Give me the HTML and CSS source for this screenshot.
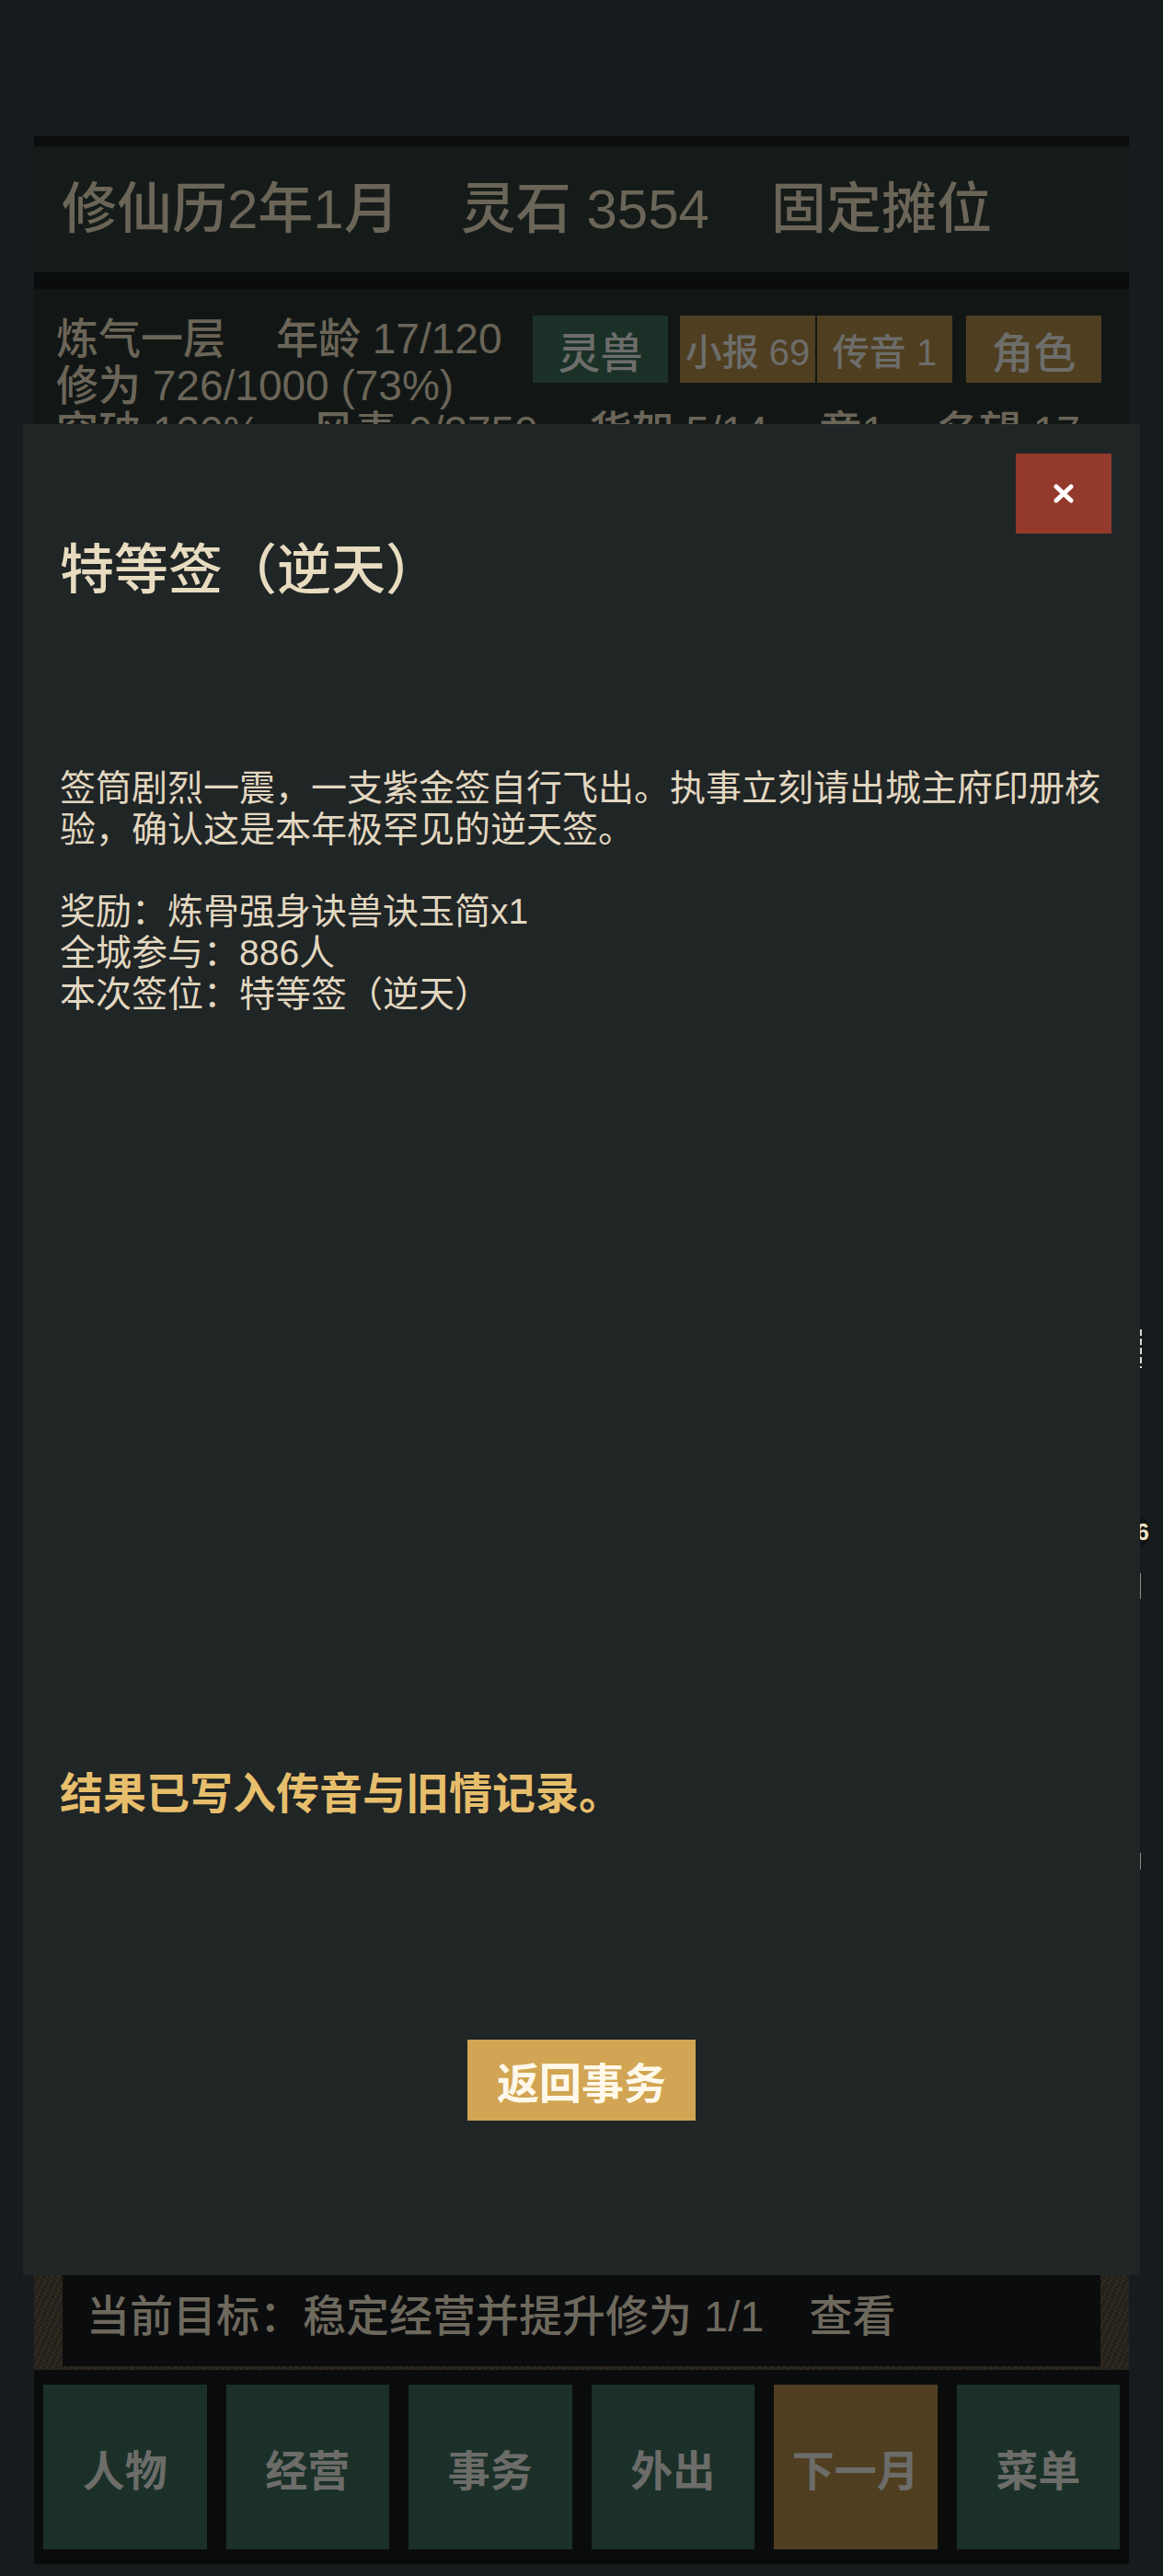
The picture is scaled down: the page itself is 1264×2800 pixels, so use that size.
FILE: index.html
```html
<!DOCTYPE html>
<html lang="zh-CN">
<head>
    <meta charset="UTF-8">
    <meta name="viewport" content="width=device-width, initial-scale=1.0">
    <title>修仙摊位</title>
    <link rel="icon" href="data:,">
    <link rel="stylesheet" href="styles.css">
</head>
<body>
    <div class="app">
        <div class="topbar">
            <span>修仙历2年1月</span>
            <span>灵石 3554</span>
            <span>固定摊位</span>
        </div>
        <div class="status">
            <div class="status-row">
                <div class="status-text">
                    <div><span class="stat-wide">炼气一层</span>年龄 17/120</div>
                    <div>修为 726/1000 (73%)</div>
                </div>
                <div class="tabs">
                    <button class="tab tab-green">灵兽</button>
                    <button class="tab tab-gold tab-small tab-pair">小报 69</button>
                    <button class="tab tab-gold tab-small tab-last">传音 1</button>
                    <button class="tab tab-gold">角色</button>
                </div>
            </div>
            <div class="stats">
                <span class="stat">突破 100%</span>
                <span class="stat">风毒 0/2750</span>
                <span class="stat">货架 5/14</span>
                <span class="stat">章1</span>
                <span>名望 17</span>
            </div>
        </div>
        <div class="board"></div>
        <div class="goal-frame">
            <div class="goal">当前目标：稳定经营并提升修为 1/1<span class="goal-link">查看</span></div>
        </div>
        <div class="nav">
            <button class="nav-btn">人物</button>
            <button class="nav-btn">经营</button>
            <button class="nav-btn">事务</button>
            <button class="nav-btn">外出</button>
            <button class="nav-btn nav-gold">下一月</button>
            <button class="nav-btn">菜单</button>
        </div>
    </div>

    <!-- bits of the board that stick out past the dialog -->
    <div class="peek peek-mark"></div>
    <div class="peek peek-badge">6</div>
    <div class="peek peek-line"></div>
    <div class="peek peek-line peek-line-low"></div>

    <div class="modal">
        <button class="modal-close" aria-label="关闭">
            <svg width="22" height="21" viewBox="0 0 22 21"><path d="M3 3L19 18M19 3L3 18" stroke="#fff" stroke-width="5" stroke-linecap="round"/></svg>
        </button>
        <h2 class="modal-title">特等签（逆天）</h2>
        <p class="modal-text">签筒剧烈一震，一支紫金签自行飞出。执事立刻请出城主府印册核验，确认这是本年极罕见的逆天签。<br><br>奖励：炼骨强身诀兽诀玉简x1<br>全城参与：886人<br>本次签位：特等签（逆天）</p>
        <p class="modal-note">结果已写入传音与旧情记录。</p>
        <div class="modal-actions">
            <button class="btn-return">返回事务</button>
        </div>
    </div>
</body>
</html>
```

FILE: styles.css
```css
html, body {
    height: 100%;
}
body {
    margin: 0;
    background-color: #161b1e;
    font-family: "Liberation Sans", "Noto Sans CJK SC", sans-serif;
}
button {
    font-family: inherit;
    border: none;
    padding: 0;
    cursor: pointer;
}
.app {
    margin: 0 37px;
    padding-top: 148px;
    height: calc(100vh - 13px);
    box-sizing: border-box;
    display: flex;
    flex-direction: column;
}
.topbar {
    height: 137px;
    border-top: 11px solid #0a0c0d;
    border-bottom: 18px solid #0a0c0d;
    background-color: #151b19;
    padding: 0 30px;
    display: flex;
    align-items: center;
    gap: 67px;
    font-size: 60px;
    font-weight: 500;
    line-height: 1.15;
    color: #6b6558;
}
.status {
    background-color: #121716;
    padding: 29px 30px 0 24px;
    font-size: 46px;
    font-weight: 500;
    line-height: 1.1;
    color: #6b6558;
}
.status-row {
    display: flex;
    justify-content: space-between;
    align-items: flex-start;
}
.stat-wide {
    margin-right: 55px;
}
.stat {
    margin-right: 43px;
}
.stats {
    white-space: nowrap;
}
.tabs {
    display: flex;
}
.tab {
    width: 147px;
    height: 73px;
    font-size: 46px;
    font-weight: 500;
    color: #6d6d6b;
    display: flex;
    align-items: center;
    justify-content: center;
}
.tab-green {
    background-color: #1b3128;
    margin-right: 13px;
}
.tab-gold {
    background-color: #4f3f20;
}
.tab-small {
    font-size: 40px;
}
.tab-pair {
    margin-right: 2px;
}
.tab-last {
    margin-right: 15px;
}
.board {
    flex: 1;
    background-color: #121716;
}
.goal-frame {
    padding: 4px 31px;
    background-color: #28231c;
    background-image:
        repeating-linear-gradient(115deg, rgba(255, 240, 210, 0.04) 0 2px, transparent 2px 6px),
        repeating-linear-gradient(35deg, rgba(0, 0, 0, 0.25) 0 1px, transparent 1px 4px);
}
.goal {
    background-color: #0b0c0d;
    padding: 28px 26px 27px;
    font-size: 47px;
    font-weight: 500;
    line-height: 1.15;
    color: #6e695d;
}
.goal-link {
    margin-left: 49px;
}
.nav {
    background-color: #0a0c0c;
    padding: 16px 10px;
    display: grid;
    grid-template-columns: repeat(6, 1fr);
    gap: 21px;
}
.nav-btn {
    height: 179px;
    background-color: #1b3029;
    color: #6c6c69;
    font-size: 46px;
    font-weight: bold;
}
.nav-gold {
    background-color: #4f3f20;
}
.peek {
    position: absolute;
}
.peek-mark {
    left: 1239px;
    top: 1445px;
    width: 2px;
    height: 42px;
    background: repeating-linear-gradient(#d8d8d4 0 7px, transparent 7px 10px);
}
.peek-badge {
    left: 1210px;
    top: 1645px;
    width: 40px;
    height: 40px;
    border-radius: 50%;
    background-color: #101416;
    color: #efe3c6;
    font-size: 25px;
    font-weight: bold;
    line-height: 40px;
    text-align: right;
    box-sizing: border-box;
    padding-right: 1px;
}
.peek-line {
    left: 1239px;
    top: 1710px;
    width: 1px;
    height: 28px;
    background-color: #8a8a86;
}
.peek-line-low {
    top: 2014px;
    height: 18px;
}
.modal {
    position: absolute;
    left: 25px;
    top: 461px;
    width: 1214px;
    height: 2012px;
    box-sizing: border-box;
    padding: 126px 40px 0;
    background-color: #202526;
}
.modal-close {
    position: absolute;
    top: 32px;
    right: 31px;
    width: 104px;
    height: 87px;
    background-color: #943a2d;
    display: flex;
    align-items: center;
    justify-content: center;
}
.modal-title {
    margin: 0;
    font-size: 59px;
    font-weight: 500;
    line-height: 1.15;
    color: #e8dcc0;
}
.modal-text {
    margin: 180px 0 0;
    font-size: 39px;
    line-height: 1.15;
    color: #e2d7c0;
}
.modal-note {
    margin: 819px 0 0;
    font-size: 47px;
    font-weight: bold;
    line-height: 1.15;
    color: #e6be6c;
}
.modal-actions {
    margin-top: 240px;
    text-align: center;
}
.btn-return {
    height: 88px;
    padding: 0 32px;
    background-color: #d1a553;
    color: #fff8ea;
    font-size: 46px;
    font-weight: bold;
}
```
